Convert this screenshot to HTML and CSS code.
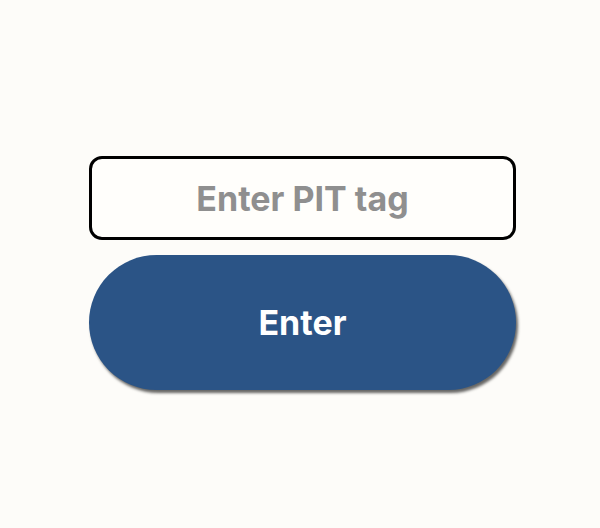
FILE: index.html
```html
<!DOCTYPE html>
<html>
<head>
<meta charset="utf-8">
<link rel="stylesheet" href="styles.css">
</head>
<body>
<main class="page">
  <form class="form">
    <input class="field" type="text" placeholder="Enter PIT tag">
    <button class="btn" type="button">Enter</button>
  </form>
</main>
</body>
</html>
```
FILE: styles.css
```css
html, body {
  margin: 0;
  padding: 0;
  background: #fdfcf9;
}
.page {
  width: 600px;
  height: 528px;
  display: flex;
  flex-direction: column;
  align-items: center;
  padding-top: 156px;
  box-sizing: border-box;
}
.form {
  width: 427px;
  margin-left: 5px;
  display: flex;
  flex-direction: column;
  gap: 15px;
}
.field {
  height: 84px;
  box-sizing: border-box;
  border: 3px solid #000;
  border-radius: 13px;
  background: #fffefb;
  font-family: Inter, "Noto Sans", sans-serif;
  font-weight: 700;
  font-size: 34px;
  text-align: center;
  color: #222;
  outline: none;
  padding: 0;
}
.field::placeholder {
  color: #8f8f8f;
  opacity: 1;
}
.btn {
  height: 135px;
  border: none;
  border-radius: 68px;
  background: #2b5486;
  color: #fff;
  font-family: Inter, "Noto Sans", sans-serif;
  font-weight: 700;
  font-size: 34px;
  box-shadow: 2px 3px 3px rgba(0,0,0,0.6);
  padding: 0;
}
```
